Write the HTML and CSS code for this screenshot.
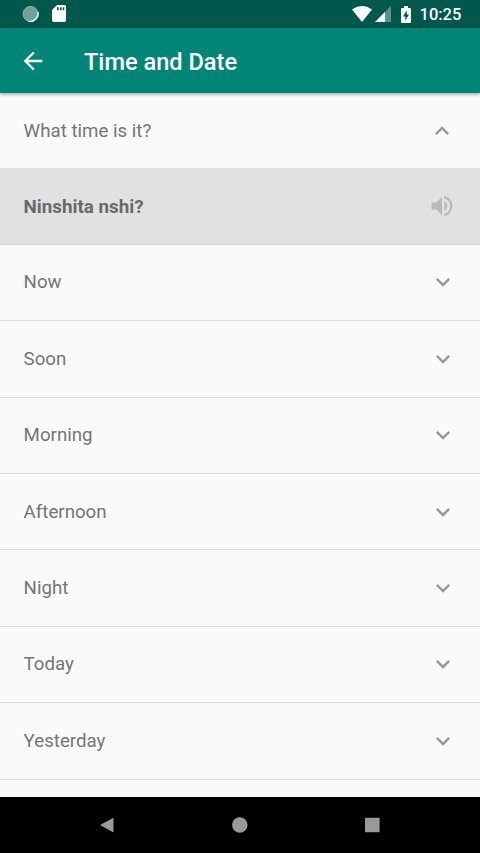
FILE: index.html
```html
<!DOCTYPE html>
<html lang="en">
<head>
<meta charset="utf-8">
<title>Time and Date</title>
<link rel="stylesheet" href="styles.css">
</head>
<body>
<svg class="defs" aria-hidden="true">
  <symbol id="down" viewBox="0 0 24 24"><path d="M7.41 8.59 12 13.17l4.59-4.58L18 10l-6 6-6-6z"/></symbol>
  <symbol id="up" viewBox="0 0 24 24"><path d="M12 8l-6 6 1.41 1.41L12 10.83l4.59 4.58L18 14z"/></symbol>
</svg>
<div class="screen">
  <div class="status">
    <svg class="sync" viewBox="0 0 18 18"><circle cx="8.6" cy="9" r="7.6" fill="#6fa398"/><circle cx="8.6" cy="9" r="7.6" fill="none" stroke="#8ab5ac" stroke-width="1"/><path d="M16 7A7.7 7.7 0 0 1 6.6 16.5A9 9 0 0 0 16 7z" fill="#e4fffa" stroke="#e4fffa" stroke-width=".8"/></svg>
    <svg class="sd" viewBox="0 0 14 17"><path d="M5 0h7.3Q14 0 14 1.7v13.6Q14 17 12.3 17H1.7Q0 17 0 15.3V5z" fill="#fff"/><path d="M5 2.2h1.7v3H5zM8 2.2h1.6v3H8zM10.8 2.2h1.5v3h-1.5z" fill="#00574b"/></svg>
    <svg class="wifi" viewBox="0 0 20 16"><path d="M0 3.4Q10-3.4 20 3.4L10 16z" fill="#fff"/></svg>
    <svg class="signal" viewBox="0 0 16 16"><path d="M16 0v16H0z" fill="#5c9187"/><path d="M10 6v10H0z" fill="#fff"/></svg>
    <svg class="battery" viewBox="0 0 10 17"><path d="M3 0h4v2h2q1 0 1 1v13q0 1-1 1H1q-1 0-1-1V3q0-1 1-1h2z" fill="#fff"/><path d="M5.8 4.3 2 10.4h2.3v4.3L8 8.6H5.8z" fill="#00574b"/></svg>
    <span class="clock">10:25</span>
  </div>
  <header class="toolbar">
    <svg class="back" viewBox="0 0 24 24"><path d="M20 11H7.83l5.59-5.59L12 4l-8 8 8 8 1.41-1.41L7.83 13H20z"/></svg>
    <h1>Time and Date</h1>
  </header>
  <main class="list">
    <div class="row open"><span>What time is it?</span><svg class="icon"><use href="#up"/></svg></div>
    <div class="row answer"><span>Ninshita nshi?</span><svg class="icon" viewBox="0 0 24 24"><path d="M3 9v6h4l5 5V4L7 9zm13.5 3A4.5 4.5 0 0 0 14 7.97v8.05A4.5 4.5 0 0 0 16.5 12zM14 3.23v2.06a7 7 0 0 1 0 13.42v2.06a9 9 0 0 0 0-17.54z"/></svg></div>
    <div class="row"><span>Now</span><svg class="icon"><use href="#down"/></svg></div>
    <div class="row"><span>Soon</span><svg class="icon"><use href="#down"/></svg></div>
    <div class="row"><span>Morning</span><svg class="icon"><use href="#down"/></svg></div>
    <div class="row"><span>Afternoon</span><svg class="icon"><use href="#down"/></svg></div>
    <div class="row"><span>Night</span><svg class="icon"><use href="#down"/></svg></div>
    <div class="row"><span>Today</span><svg class="icon"><use href="#down"/></svg></div>
    <div class="row"><span>Yesterday</span><svg class="icon"><use href="#down"/></svg></div>
  </main>
  <nav class="nav">
    <svg viewBox="0 0 16 16"><path d="M14.5.8v14.6L1 8.1z"/></svg>
    <svg viewBox="0 0 16 16"><circle cx="7.8" cy="8" r="7.7"/></svg>
    <svg viewBox="0 0 16 16"><rect x="1" y=".8" width="14.6" height="14.4" rx=".6"/></svg>
  </nav>
</div>
</body>
</html>
```
FILE: styles.css
```css
* { box-sizing: border-box; }
body {
  margin: 0;
  font-family: Roboto, "Liberation Sans", sans-serif;
  background: #fafafa;
}
.defs { display: none; }
.screen {
  width: 480px;
  height: 853px;
  display: flex;
  flex-direction: column;
  overflow: hidden;
}
.status {
  flex: none;
  height: 28px;
  display: flex;
  align-items: center;
  padding: 0 17.5px 0 21.5px;
  background: #00574b;
  color: #fff;
}
.sync { width: 18px; height: 18px; }
.sd { width: 14px; height: 17px; margin: 0 0 1px 12px; }
.wifi { width: 20px; height: 16px; margin-left: auto; }
.signal { width: 16px; height: 16px; margin-left: 3px; }
.battery { width: 10px; height: 17px; margin-left: 10px; }
.clock {
  width: 43px;
  margin-left: 8.5px;
  font-size: 16.5px;
  font-weight: 500;
  line-height: 28px;
  padding-top: 1px;
}
.toolbar {
  flex: none;
  height: 65px;
  display: flex;
  align-items: center;
  padding-left: 18.7px;
  background: #008577;
  color: #fff;
  box-shadow: 0 1px 4px rgba(0, 0, 0, .4);
  z-index: 1;
}
.toolbar h1 {
  margin: 0 0 0 37.3px;
  padding-top: 2px;
  font-size: 23.6px;
  font-weight: 500;
  line-height: 30px;
}
.back { width: 28px; height: 28px; fill: #fff; }
.list { flex: 1; min-height: 0; overflow: hidden; }
.row {
  height: 76.4px;
  display: flex;
  align-items: center;
  justify-content: space-between;
  padding: 0 23.5px 0 23.6px;
  border-bottom: 1px solid #dcdcdc;
  font-size: 18.7px;
  color: #757575;
}
.open {
  height: 76.1px;
  padding-right: 24px;
  border-bottom-color: #e1e1e1;
}
.answer {
  height: 75.7px;
  padding-right: 24px;
  background: #e1e1e1;
  border-bottom-color: #d8d8d8;
  font-weight: 700;
  font-size: 18.8px;
  color: #696969;
}
.answer span { padding-top: 2px; }
.icon { width: 28px; height: 28px; fill: #999; }
.answer .icon { fill: #b9b9b9; }
.nav {
  flex: none;
  height: 56px;
  display: flex;
  align-items: center;
  justify-content: space-between;
  padding: 0 100px 0 99px;
  background: #000;
}
.nav svg { width: 16px; height: 16px; fill: #999; }
```
